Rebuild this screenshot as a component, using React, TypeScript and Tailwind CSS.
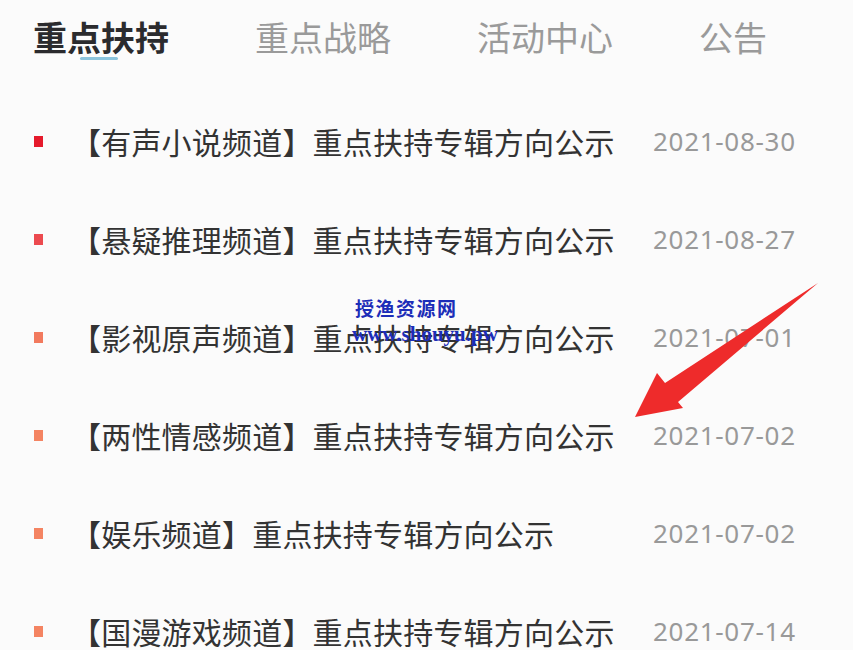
import React from "react";

const rows = [
  { t: "【有声小说频道】重点扶持专辑方向公示", d: "2021-08-30", c: "bg-[#e51a2b]" },
  { t: "【悬疑推理频道】重点扶持专辑方向公示", d: "2021-08-27", c: "bg-[#ec4a4f]" },
  { t: "【影视原声频道】重点扶持专辑方向公示", d: "2021-07-01", c: "bg-[#f27a5e]" },
  { t: "【两性情感频道】重点扶持专辑方向公示", d: "2021-07-02", c: "bg-[#f48462]" },
  { t: "【娱乐频道】重点扶持专辑方向公示", d: "2021-07-02", c: "bg-[#f48462]" },
  { t: "【国漫游戏频道】重点扶持专辑方向公示", d: "2021-07-14", c: "bg-[#f48462]" },
];

export default function App() {
  return (
    <div
      className="relative w-[853px] h-[650px] overflow-hidden bg-[#fbfbfb]"
      style={{ fontFamily: '"Noto Sans CJK SC", "Noto Sans", sans-serif' }}
    >
      <div className="flex h-[92px] pl-[33px] pt-[14px] gap-[86px] text-[34px] leading-[46px]">
        <div className="relative w-[136px] font-bold text-[#2b2b2e]">
          重点扶持
          <div className="absolute left-[47px] top-[43px] w-[38px] h-[3px] rounded-full bg-[#8cc4dd]" />
        </div>
        <div className="w-[136px] text-[#9a9a9a]">重点战略</div>
        <div className="w-[136px] text-[#9a9a9a]">活动中心</div>
        <div className="w-[136px] text-[#9a9a9a]">公告</div>
      </div>
      <div className="flex flex-col">
        {rows.map((r, i) => (
          <div key={i} className="flex items-center h-[98px]">
            <div className={`ml-[34px] w-[9px] h-[11px] ${r.c}`} />
            <div className="ml-[28px] w-[582px] text-[30px] text-[#333] whitespace-nowrap tracking-[0.2px]">
              {r.t}
            </div>
            <div
              className="text-[26px] text-[#999] tracking-[0.7px]"
              style={{ fontFamily: '"Noto Sans", "Open Sans", sans-serif' }}
            >
              {r.d}
            </div>
          </div>
        ))}
      </div>
      <div
        className="absolute left-[355px] top-[298px] text-[19px] font-bold text-[#1c2db8] tracking-[1.5px] leading-none"
        style={{ fontFamily: '"Noto Sans CJK SC", serif' }}
      >
        授渔资源网
      </div>
      <div
        className="absolute left-[352px] top-[324px] text-[21px] font-bold text-[#1c2db8] leading-none"
        style={{ fontFamily: '"Liberation Serif", serif' }}
      >
        www.shouyu.pw
      </div>
      <svg className="absolute left-0 top-0" width="853" height="650" viewBox="0 0 853 650">
        <polygon
          points="635,417 657,373 665,383 818,283 678,402 683,408"
          fill="#ee2b2b"
        />
      </svg>
    </div>
  );
}
